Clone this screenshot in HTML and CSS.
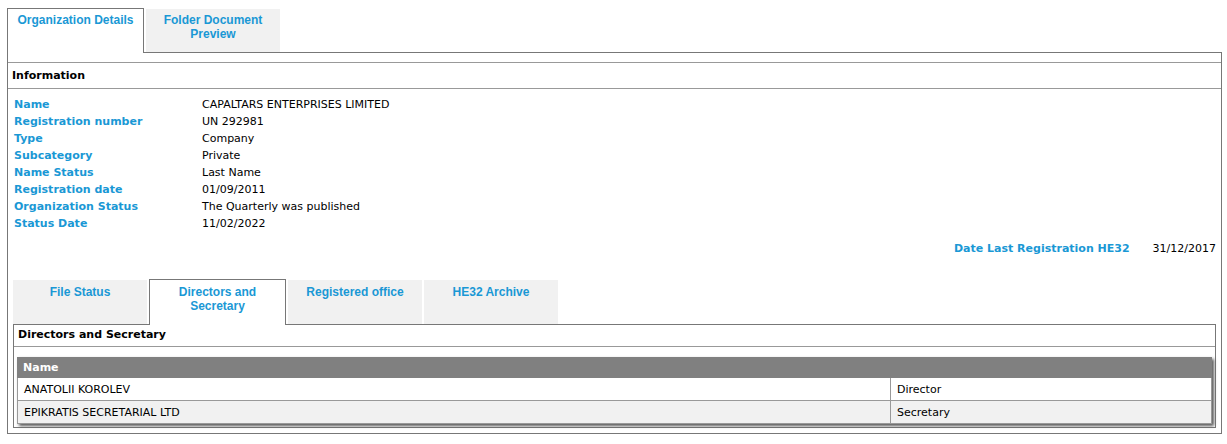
FILE: index.html
```html
<!DOCTYPE html>
<html>
<head>
    <title>Organization Details</title>
    <link rel="stylesheet" href="styles.css">
</head>
<body>
    <div class="tabbar">
        <div class="tab active">Organization Details</div>
        <div class="tab">Folder Document<br>Preview</div>
    </div>
    <div class="panel">
        <div class="head">Information</div>
        <div class="info">
            <div class="lab">Name</div><div class="val">CAPALTARS ENTERPRISES LIMITED</div>
            <div class="lab">Registration number</div><div class="val">UN 292981</div>
            <div class="lab">Type</div><div class="val">Company</div>
            <div class="lab">Subcategory</div><div class="val">Private</div>
            <div class="lab">Name Status</div><div class="val">Last Name</div>
            <div class="lab">Registration date</div><div class="val">01/09/2011</div>
            <div class="lab">Organization Status</div><div class="val">The Quarterly was published</div>
            <div class="lab">Status Date</div><div class="val">11/02/2022</div>
        </div>
        <div class="last-reg">
            <span class="lab">Date Last Registration HE32</span>
            <span class="val">31/12/2017</span>
        </div>

        <div class="sub">
            <div class="tabbar small">
                <div class="tab">File Status</div>
                <div class="tab active">Directors and<br>Secretary</div>
                <div class="tab">Registered office</div>
                <div class="tab">HE32 Archive</div>
            </div>
            <div class="panel inner">
                <div class="head">Directors and Secretary</div>
                <table class="grid">
                    <tr><th colspan="2">Name</th></tr>
                    <tr><td class="c1">ANATOLII KOROLEV</td><td>Director</td></tr>
                    <tr class="alt"><td class="c1">EPIKRATIS SECRETARIAL LTD</td><td>Secretary</td></tr>
                </table>
            </div>
        </div>
    </div>
</body>
</html>
```

FILE: styles.css
```css
* {
    margin: 0;
    padding: 0;
    box-sizing: border-box;
}

body {
    padding: 8px 5px 0 7px;
    font-family: "DejaVu Sans", Verdana, sans-serif;
    font-size: 11px;
    color: #000;
    background: #fff;
}

.tabbar {
    display: flex;
    align-items: flex-end;
    gap: 2px;
}

.tab {
    width: 134px;
    height: 43px;
    padding-top: 4px;
    font-family: "Liberation Sans", Arial, sans-serif;
    font-size: 12px;
    font-weight: bold;
    line-height: 14px;
    text-align: center;
    color: #1a98d5;
    background: #f1f1f1;
}

.tab.active {
    position: relative;
    z-index: 1;
    width: 137px;
    height: 45px;
    margin-bottom: -1px;
    background: #fff;
    border: 1px solid #777;
    border-bottom: none;
}

.panel {
    border: 1px solid #777;
    padding-top: 9px;
    padding-bottom: 5px;
}

.head {
    height: 27px;
    line-height: 26px;
    padding-left: 4px;
    font-weight: bold;
    border-top: 1px solid #999;
    border-bottom: 1px solid #999;
}

.info {
    display: grid;
    grid-template-columns: 188px 1fr;
    margin-top: 7px;
    padding-left: 6px;
    line-height: 17px;
}

.lab {
    font-weight: bold;
    color: #1a98d5;
}

.last-reg {
    display: flex;
    justify-content: flex-end;
    margin-top: 8px;
    padding-right: 5px;
    line-height: 17px;
}

.last-reg .lab {
    margin-right: 23px;
}

.sub {
    margin: 22px 5px 0 5px;
}

.small .tab {
    height: 44px;
    padding-top: 5px;
}

.small .tab.active {
    height: 46px;
    padding-top: 5px;
}

.panel.inner {
    padding: 0 3px 3px 3px;
}

.inner .head {
    height: 22px;
    line-height: 20px;
    margin: 0 -3px;
    border-top: none;
}

.grid {
    width: 100%;
    margin-top: 10px;
    border-collapse: collapse;
    box-shadow: 2px 2px 3px #555;
}

.grid th {
    height: 20px;
    padding-left: 5px;
    text-align: left;
    color: #fff;
    background: #808080;
    border: 1px solid #808080;
}

.grid td {
    height: 23px;
    padding-left: 6px;
    border: 1px solid #999;
    background: #fff;
}

.grid .c1 {
    width: 873px;
}

.grid .alt td {
    background: #f1f1f1;
}
```
